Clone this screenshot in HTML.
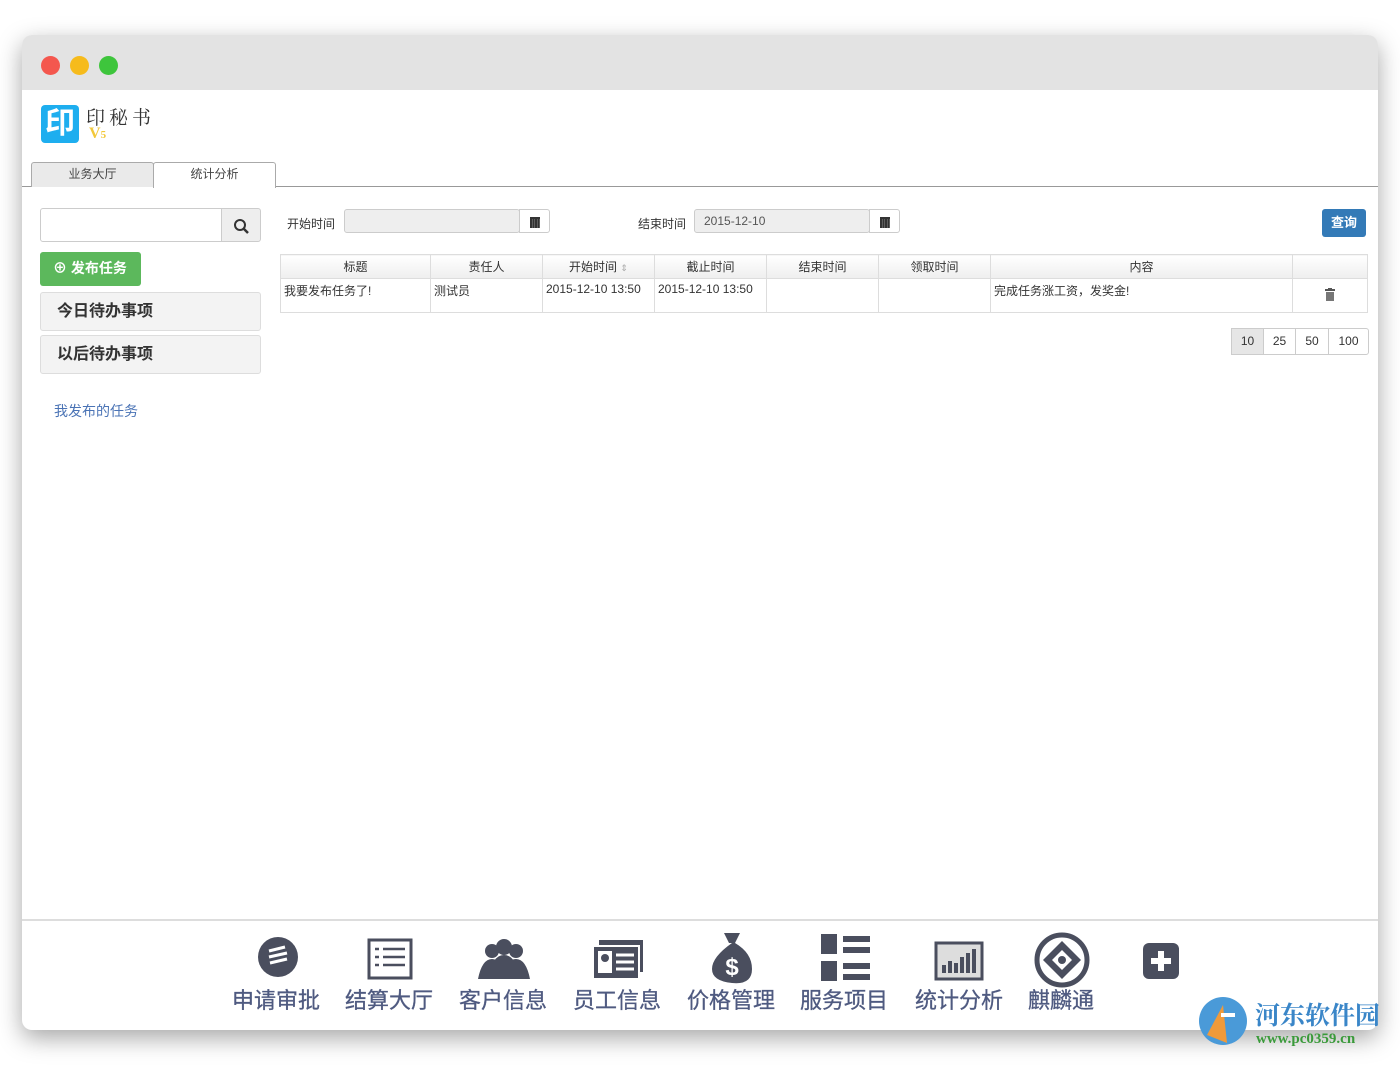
<!DOCTYPE html>
<html><head><meta charset="utf-8"><style>
*{margin:0;padding:0;box-sizing:border-box}
body{width:1400px;height:1066px;background:#fff;font-family:"Liberation Sans","Noto Sans CJK SC",sans-serif;position:relative;overflow:hidden;color:#333}
.win{position:absolute;left:22px;top:35px;width:1356px;height:995px;background:#fff;border-radius:10px;box-shadow:0 8px 24px rgba(0,0,0,.35);overflow:hidden}
.tb{height:55px;background:#e3e3e3;position:relative}
.dot{position:absolute;top:21px;width:19px;height:19px;border-radius:50%}
.a{position:absolute}
.tab{position:absolute;top:127px;height:25px;border:1px solid #aaa;border-bottom:none;border-radius:3px 3px 0 0;font-size:12px;text-align:center;line-height:23px;color:#444}
.inp{position:absolute;border:1px solid #ccc;background:#eee;border-radius:3px}
.cal{position:absolute;width:31px;height:24px;border:1px solid #ccc;background:#fff;border-radius:0 3px 3px 0}
.cal:after{content:"";position:absolute;left:10px;top:7px;width:10px;height:9px;background:repeating-linear-gradient(90deg,#333 0 2px,#888 2px 2.5px);border-top:2px solid #333}
table{position:absolute;left:258px;top:219px;width:1088px;border-collapse:collapse;font-size:12px}
th{height:24px;border:1px solid #ddd;font-weight:normal;background:linear-gradient(#fff,#eee)}
td{height:34px;border:1px solid #ddd;vertical-align:top;padding:3px 3px}
.menu{position:absolute;left:18px;width:221px;height:39px;border:1px solid #ddd;background:#f3f3f3;border-radius:3px;font-size:16px;font-weight:bold;line-height:37px;padding-left:16px;color:#333}
.pg{position:absolute;top:293px;height:27px;border:1px solid #ccc;font-size:12px;line-height:25px;text-align:center}
.lab{position:absolute;top:948px;font-size:22px;color:#4f5a80;letter-spacing:0;-webkit-text-stroke:0.3px #4f5a80}
.ic{position:absolute;top:897px}
</style></head><body>
<div class="win">
<div class="tb"><div class="dot" style="left:19px;background:#f4574e"></div><div class="dot" style="left:48px;background:#f6bb1c"></div><div class="dot" style="left:77px;background:#3ec53c"></div></div>
<div class="a" style="left:19px;top:70px;width:38px;height:38px;background:#1eaeef;border-radius:4px;color:#fff;font-size:30px;font-weight:bold;text-align:center;line-height:38px">印</div>
<div class="a" style="left:64px;top:68px;font-size:19px;letter-spacing:4px;color:#333;font-family:'Noto Serif CJK SC',serif">印秘书</div>
<div class="a" style="left:67px;top:90px;font-size:16px;font-weight:bold;color:#f2c83a;font-family:'Liberation Serif',serif">V<span style="font-size:11px">5</span></div>
<div class="a" style="left:0;top:151px;width:1356px;border-top:1px solid #999"></div>
<div class="tab" style="left:9px;width:123px;background:#eaeaea">业务大厅</div>
<div class="tab" style="left:131px;width:123px;background:#fff;height:26px">统计分析</div>
<div class="a" style="left:18px;top:173px;width:182px;height:34px;border:1px solid #ccc;border-radius:3px 0 0 3px"></div>
<div class="a" style="left:199px;top:173px;width:40px;height:34px;border:1px solid #ccc;background:#eee;border-radius:0 3px 3px 0"><svg width="40" height="34"><circle cx="18" cy="16" r="5" fill="none" stroke="#333" stroke-width="2"/><path d="M22 20l4 4" stroke="#333" stroke-width="2.5"/></svg></div>
<div class="a" style="left:18px;top:217px;width:101px;height:34px;background:#5cb85c;border-radius:3px;color:#fff;font-weight:bold;font-size:14px;line-height:32px;padding-left:13px">⊕ 发布任务</div>
<div class="menu" style="top:257px">今日待办事项</div>
<div class="menu" style="top:300px">以后待办事项</div>
<div class="a" style="left:32px;top:366px;font-size:14px;color:#4a73b5">我发布的任务</div>
<div class="a" style="left:265px;top:180px;font-size:12px">开始时间</div>
<div class="inp" style="left:322px;top:174px;width:176px;height:24px"></div>
<div class="cal" style="left:497px;top:174px"></div>
<div class="a" style="left:616px;top:180px;font-size:12px">结束时间</div>
<div class="inp" style="left:672px;top:174px;width:176px;height:24px;font-size:12px;line-height:22px;padding-left:9px;color:#555">2015-12-10</div>
<div class="cal" style="left:847px;top:174px"></div>
<div class="a" style="left:1300px;top:174px;width:44px;height:28px;background:#337ab7;border-radius:3px;color:#fff;font-weight:bold;font-size:13px;text-align:center;line-height:27px">查询</div>
<table><tr><th style="width:150px">标题</th><th style="width:112px">责任人</th><th style="width:112px">开始时间 <span style="color:#aaa;font-size:9px">⇕</span></th><th style="width:112px">截止时间</th><th style="width:112px">结束时间</th><th style="width:112px">领取时间</th><th style="width:302px">内容</th><th></th></tr>
<tr><td>我要发布任务了!</td><td>测试员</td><td>2015-12-10 13:50</td><td>2015-12-10 13:50</td><td></td><td></td><td>完成任务涨工资，发奖金!</td><td style="text-align:center;vertical-align:middle"><svg width="10" height="13"><rect x="0" y="1" width="10" height="2" fill="#555"/><rect x="3" y="0" width="4" height="1.5" fill="#555"/><rect x="1" y="4" width="8" height="9" fill="#777"/></svg></td></tr></table>
<div class="pg" style="left:1209px;width:33px;background:#e6e6e6">10</div>
<div class="pg" style="left:1241px;width:33px">25</div>
<div class="pg" style="left:1273px;width:34px">50</div>
<div class="pg" style="left:1306px;width:41px;border-radius:0 3px 3px 0">100</div>
<div class="a" style="left:0;top:884px;width:1356px;border-top:2px solid #ddd"></div>
<svg class="ic" style="left:234px;top:900px" width="44" height="44"><circle cx="22" cy="22" r="20" fill="#4a4e5e"/><path d="M13 16l16-4M13 22l18-4M14 28l17-4" stroke="#fff" stroke-width="3"/></svg>
<svg class="ic" style="left:345px;top:902px" width="46" height="44"><rect x="2" y="3" width="42" height="38" fill="#fff" stroke="#4a4e5e" stroke-width="3"/><path d="M8 12h4M16 12h22M8 20h4M16 20h22M8 28h4M16 28h22" stroke="#4a4e5e" stroke-width="2.5"/></svg>
<svg class="ic" style="left:452px;top:902px" width="60" height="44"><circle cx="18" cy="14" r="7" fill="#4a4e5e"/><circle cx="42" cy="14" r="7" fill="#4a4e5e"/><circle cx="30" cy="10" r="8" fill="#4a4e5e"/><path d="M4 42q4-20 14-20t14 20zM28 42q4-20 14-20t14 20zM14 42q4-24 16-24t16 24z" fill="#4a4e5e"/></svg>
<svg class="ic" style="left:569px;top:902px" width="54" height="44"><rect x="8" y="3" width="44" height="32" fill="#4a4e5e"/><rect x="2" y="9" width="46" height="33" fill="#4a4e5e" stroke="#fff" stroke-width="2"/><rect x="7" y="14" width="14" height="22" fill="#fff"/><circle cx="14" cy="21" r="4" fill="#4a4e5e"/><path d="M25 18h18M25 25h18M25 32h18" stroke="#fff" stroke-width="3"/></svg>
<svg class="ic" style="left:688px;top:896px" width="44" height="54"><path d="M14 2h16l-5 10h-6zM19 12h6q17 10 17 26t-20 14t-20-14t20-26z" fill="#4a4e5e"/><text x="22" y="44" font-size="24" font-weight="bold" fill="#fff" text-anchor="middle" font-family="Liberation Sans">$</text></svg>
<svg class="ic" style="left:799px;top:899px" width="50" height="50"><rect x="0" y="0" width="16" height="20" fill="#4a4e5e"/><rect x="22" y="2" width="27" height="6" fill="#4a4e5e"/><rect x="22" y="13" width="27" height="6" fill="#4a4e5e"/><rect x="0" y="27" width="16" height="20" fill="#4a4e5e"/><rect x="22" y="29" width="27" height="6" fill="#4a4e5e"/><rect x="22" y="40" width="27" height="6" fill="#4a4e5e"/></svg>
<svg class="ic" style="left:912px;top:902px" width="50" height="44"><rect x="2" y="6" width="46" height="36" fill="#ddd" stroke="#4a4e5e" stroke-width="3"/><path d="M10 36v-8M16 36v-12M22 36v-10M28 36v-16M34 36v-20M40 36v-24" stroke="#4a4e5e" stroke-width="4"/></svg>
<svg class="ic" style="left:1011px;top:896px" width="58" height="58"><circle cx="29" cy="29" r="25" fill="#fff" stroke="#4a4e5e" stroke-width="5"/><path d="M29 10l19 19-19 19-19-19z" fill="#4a4e5e"/><path d="M29 19l10 10-10 10-10-10z" fill="#fff"/><circle cx="29" cy="29" r="4" fill="#4a4e5e"/></svg>
<svg class="ic" style="left:1121px;top:908px" width="36" height="36"><rect width="36" height="36" rx="6" fill="#4a4e5e"/><path d="M18 8v20M8 18h20" stroke="#fff" stroke-width="6"/></svg>
<div class="lab" style="left:210px">申请审批</div>
<div class="lab" style="left:323px">结算大厅</div>
<div class="lab" style="left:437px">客户信息</div>
<div class="lab" style="left:551px">员工信息</div>
<div class="lab" style="left:665px">价格管理</div>
<div class="lab" style="left:778px">服务项目</div>
<div class="lab" style="left:893px">统计分析</div>
<div class="lab" style="left:1006px">麒麟通</div>
</div>
<svg class="a" style="left:1195px;top:995px" width="58" height="58"><circle cx="28" cy="26" r="24" fill="#4a9ad8"/><path d="M12 40l16-30 4 38z" fill="#f09a3a"/><path d="M26 20h14" stroke="#fff" stroke-width="4"/></svg>
<div class="a" style="left:1255px;top:996px;font-size:25px;font-weight:bold;color:#3a86c8;font-family:'Noto Serif CJK SC',serif">河东软件园</div>
<div class="a" style="left:1256px;top:1031px;font-size:15px;font-weight:bold;color:#3a9a3a;font-family:'Liberation Serif',serif">www.pc0359.cn</div>
</body></html>
